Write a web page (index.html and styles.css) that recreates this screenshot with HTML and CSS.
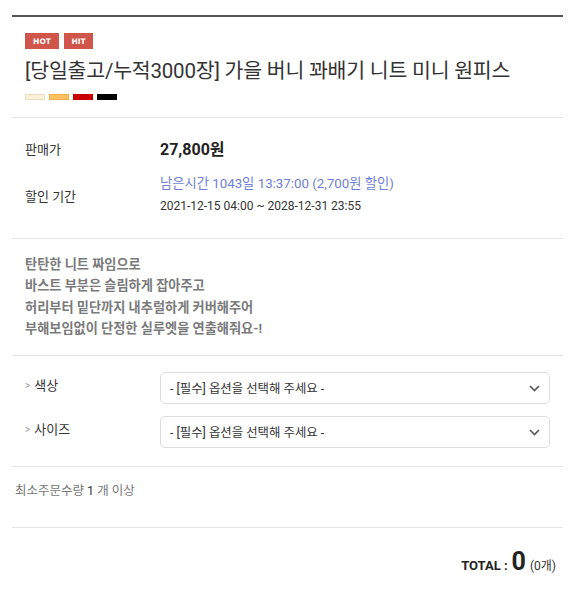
FILE: index.html
```html
<!DOCTYPE html>
<html lang="ko">
<head>
<meta charset="utf-8">
<link rel="stylesheet" href="styles.css">
</head>
<body>
<div class="wrap">
  <section class="head">
    <div class="badges"><span class="badge">HOT</span><span class="badge hit">HIT</span></div>
    <h1 class="title">[당일출고/누적3000장] 가을 버니 꽈배기 니트 미니 원피스</h1>
    <div class="swatches">
      <span class="sw sw1"></span><span class="sw sw2"></span><span class="sw sw3"></span><span class="sw sw4"></span>
    </div>
  </section>
  <section class="info">
    <div class="row price-row">
      <div class="label">판매가</div>
      <div class="value price">27,800원</div>
    </div>
    <div class="row disc-row">
      <div class="label">할인 기간</div>
      <div class="value">
        <div class="remain">남은시간 1043일 13:37:00 (2,700원 할인)</div>
        <div class="period">2021-12-15 04:00 ~ 2028-12-31 23:55</div>
      </div>
    </div>
  </section>
  <section class="desc">
    <p>탄탄한 니트 짜임으로</p>
    <p>바스트 부분은 슬림하게 잡아주고</p>
    <p>허리부터 밑단까지 내추럴하게 커버해주어</p>
    <p>부해보임없이 단정한 실루엣을 연출해줘요-!</p>
  </section>
  <section class="options">
    <div class="opt">
      <div class="opt-label"><span class="arr">&gt;</span>색상</div>
      <div class="select"><span>- [필수] 옵션을 선택해 주세요 -</span>
        <svg class="chev" width="11" height="7" viewBox="0 0 11 7"><path d="M1 1l4.5 4.5L10 1" fill="none" stroke="#555" stroke-width="1.6"/></svg>
      </div>
    </div>
    <div class="opt">
      <div class="opt-label"><span class="arr">&gt;</span>사이즈</div>
      <div class="select"><span>- [필수] 옵션을 선택해 주세요 -</span>
        <svg class="chev" width="11" height="7" viewBox="0 0 11 7"><path d="M1 1l4.5 4.5L10 1" fill="none" stroke="#555" stroke-width="1.6"/></svg>
      </div>
    </div>
  </section>
  <section class="minq">최소주문수량 <span class="one">1</span> 개 이상</section>
  <section class="total"><span class="tl">TOTAL :</span> <strong class="num">0</strong> <span class="cnt">(0개)</span></section>
</div>
</body>
</html>
```
FILE: styles.css
```css
* { box-sizing: border-box; }
body {
  margin: 0;
  background: #fff;
  font-family: Roboto, "Noto Sans CJK KR", sans-serif;
  color: #333;
}
.wrap {
  margin: 15px 12px 0;
  border-top: 2px solid #555;
}
.head {
  padding: 16px 13px 0;
  height: 101px;
  border-bottom: 1px solid #e5e5e5;
}
.badges { display: flex; gap: 5px; height: 16px; }
.badge {
  display: inline-flex;
  align-items: center;
  justify-content: center;
  width: 34px;
  height: 16px;
  background: #d0564c;
  color: #fff;
  font-family: "DejaVu Sans", sans-serif;
  font-size: 7.5px;
  font-weight: 700;
}
.badge.hit { width: 29px; }
.title {
  margin: 9px 0 0;
  font-size: 20.5px;
  font-weight: 400;
  line-height: 26px;
  color: #333;
  letter-spacing: -0.2px;
}
.swatches { display: flex; gap: 4px; margin-top: 10px; }
.sw { width: 20px; height: 6px; display: block; }
.sw1 { background: #fdf0d8; border: 1px solid #f0dcbc; }
.sw2 { background: #fec160; border: 1px solid #f0b050; }
.sw3 { background: #c80000; }
.sw4 { background: #000; }

.info {
  padding: 16px 13px 0;
  height: 121px;
  border-bottom: 1px solid #e5e5e5;
}
.row { display: flex; align-items: center; }
.label { width: 135px; font-size: 13px; color: #333; }
.price-row { height: 28px; }
.price { font-size: 16px; font-weight: 700; color: #222; }
.disc-row { margin-top: 11px; }
.remain { font-size: 13.3px; color: #6e7fd8; line-height: 22px; }
.period { font-size: 12px; color: #333; line-height: 22px; }

.desc {
  padding: 15px 13px 0;
  height: 117px;
  border-bottom: 1px solid #e5e5e5;
}
.desc p {
  margin: 0;
  font-size: 13.2px;
  font-weight: 700;
  line-height: 21.3px;
  color: #7a7a7a;
}

.options {
  padding: 16px 13px 0 13px;
  height: 111px;
  border-bottom: 1px solid #e5e5e5;
}
.opt { display: flex; align-items: flex-start; margin-bottom: 12px; }
.opt-label {
  width: 135px;
  font-size: 13px;
  color: #333;
  padding-top: 4px;
  line-height: 20px;
}
.arr { color: #999; font-size: 10px; margin-right: 4px; position: relative; top: -1px; }
.select {
  flex: 1;
  height: 32px;
  border: 1px solid #ddd;
  border-radius: 5px;
  display: flex;
  align-items: center;
  justify-content: space-between;
  padding: 0 9px 0 9px;
  font-size: 12.4px;
  color: #333;
}
.chev { display: block; }

.minq {
  padding: 13px 3px 0;
  height: 61px;
  border-bottom: 1px solid #e5e5e5;
  font-size: 12.5px;
  color: #777;
}
.minq .one { color: #333; }

.total {
  text-align: right;
  padding: 19px 7px 0 0;
  color: #333;
}
.tl { font-size: 13px; font-weight: 700; color: #222; }
.num { font-size: 25px; font-weight: 700; color: #222; }
.cnt { font-size: 12px; color: #333; }
```
